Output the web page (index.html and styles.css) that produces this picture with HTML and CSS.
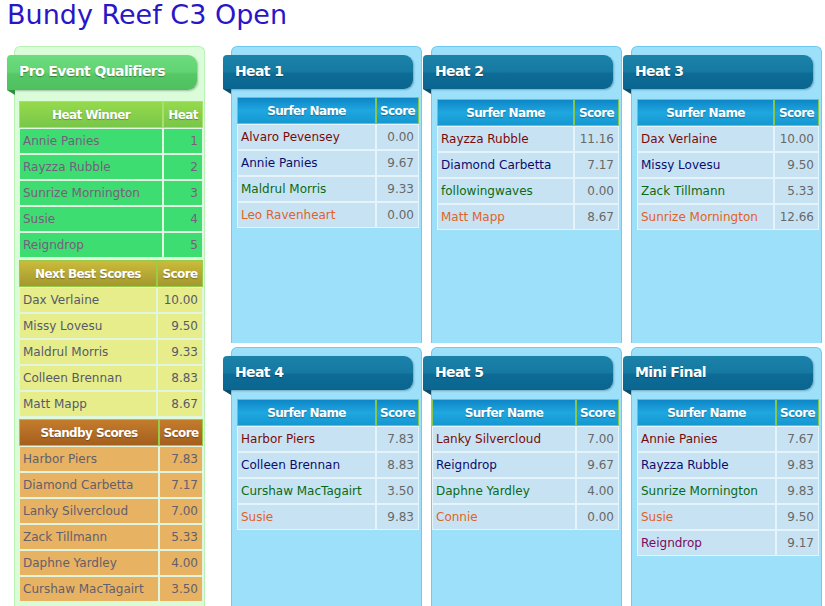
FILE: index.html
```html
<!DOCTYPE html>
<html>
<head>
<meta charset="utf-8">
<title>Bundy Reef C3 Open</title>
<link rel="stylesheet" href="styles.css">
</head>
<body>
<h1 class="title">Bundy Reef C3 Open</h1>
<div class="layout">
  <aside class="panel qual">
    <div class="ribbon ribbon-green">Pro Event Qualifiers</div>
    <table class="qtable q-win">
      <colgroup><col><col class="c-s"></colgroup>
      <tr><th>Heat Winner</th><th>Heat</th></tr>
      <tr><td>Annie Panies</td><td class="num">1</td></tr>
      <tr><td>Rayzza Rubble</td><td class="num">2</td></tr>
      <tr><td>Sunrize Mornington</td><td class="num">3</td></tr>
      <tr><td>Susie</td><td class="num">4</td></tr>
      <tr><td>Reigndrop</td><td class="num">5</td></tr>
    </table>
    <table class="qtable q-next">
      <colgroup><col><col class="c-s"></colgroup>
      <tr><th>Next Best Scores</th><th>Score</th></tr>
      <tr><td>Dax Verlaine</td><td class="num">10.00</td></tr>
      <tr><td>Missy Lovesu</td><td class="num">9.50</td></tr>
      <tr><td>Maldrul Morris</td><td class="num">9.33</td></tr>
      <tr><td>Colleen Brennan</td><td class="num">8.83</td></tr>
      <tr><td>Matt Mapp</td><td class="num">8.67</td></tr>
    </table>
    <table class="qtable q-stand">
      <colgroup><col><col class="c-s"></colgroup>
      <tr><th>Standby Scores</th><th>Score</th></tr>
      <tr><td>Harbor Piers</td><td class="num">7.83</td></tr>
      <tr><td>Diamond Carbetta</td><td class="num">7.17</td></tr>
      <tr><td>Lanky Silvercloud</td><td class="num">7.00</td></tr>
      <tr><td>Zack Tillmann</td><td class="num">5.33</td></tr>
      <tr><td>Daphne Yardley</td><td class="num">4.00</td></tr>
      <tr><td>Curshaw MacTagairt</td><td class="num">3.50</td></tr>
    </table>
  </aside>

  <div class="heats">
    <section class="panel heat">
      <div class="ribbon ribbon-blue">Heat 1</div>
      <div class="twrap">
      <table class="htable">
        <colgroup><col><col class="c-s"></colgroup>
        <tr><th>Surfer Name</th><th>Score</th></tr>
        <tr><td class="n1">Alvaro Pevensey</td><td class="num">0.00</td></tr>
        <tr><td class="n2">Annie Panies</td><td class="num">9.67</td></tr>
        <tr><td class="n3">Maldrul Morris</td><td class="num">9.33</td></tr>
        <tr><td class="n4">Leo Ravenheart</td><td class="num">0.00</td></tr>
      </table>
      </div>
    </section>
    <section class="panel heat">
      <div class="ribbon ribbon-blue">Heat 2</div>
      <div class="twrap low">
      <table class="htable wide-s">
        <colgroup><col><col class="c-s"></colgroup>
        <tr><th>Surfer Name</th><th>Score</th></tr>
        <tr><td class="n1">Rayzza Rubble</td><td class="num">11.16</td></tr>
        <tr><td class="n2">Diamond Carbetta</td><td class="num">7.17</td></tr>
        <tr><td class="n3">followingwaves</td><td class="num">0.00</td></tr>
        <tr><td class="n4">Matt Mapp</td><td class="num">8.67</td></tr>
      </table>
      </div>
    </section>
    <section class="panel heat">
      <div class="ribbon ribbon-blue">Heat 3</div>
      <div class="twrap low">
      <table class="htable wide-s">
        <colgroup><col><col class="c-s"></colgroup>
        <tr><th>Surfer Name</th><th>Score</th></tr>
        <tr><td class="n1">Dax Verlaine</td><td class="num">10.00</td></tr>
        <tr><td class="n2">Missy Lovesu</td><td class="num">9.50</td></tr>
        <tr><td class="n3">Zack Tillmann</td><td class="num">5.33</td></tr>
        <tr><td class="n4">Sunrize Mornington</td><td class="num">12.66</td></tr>
      </table>
      </div>
    </section>
    <section class="panel heat">
      <div class="ribbon ribbon-blue">Heat 4</div>
      <div class="twrap mid">
      <table class="htable">
        <colgroup><col><col class="c-s"></colgroup>
        <tr><th>Surfer Name</th><th>Score</th></tr>
        <tr><td class="n1">Harbor Piers</td><td class="num">7.83</td></tr>
        <tr><td class="n2">Colleen Brennan</td><td class="num">8.83</td></tr>
        <tr><td class="n3">Curshaw MacTagairt</td><td class="num">3.50</td></tr>
        <tr><td class="n4">Susie</td><td class="num">9.83</td></tr>
      </table>
      </div>
    </section>
    <section class="panel heat">
      <div class="ribbon ribbon-blue">Heat 5</div>
      <div class="twrap mid">
      <table class="htable wide">
        <colgroup><col><col class="c-s"></colgroup>
        <tr><th>Surfer Name</th><th>Score</th></tr>
        <tr><td class="n1">Lanky Silvercloud</td><td class="num">7.00</td></tr>
        <tr><td class="n2">Reigndrop</td><td class="num">9.67</td></tr>
        <tr><td class="n3">Daphne Yardley</td><td class="num">4.00</td></tr>
        <tr><td class="n4">Connie</td><td class="num">0.00</td></tr>
      </table>
      </div>
    </section>
    <section class="panel heat">
      <div class="ribbon ribbon-blue">Mini Final</div>
      <div class="twrap mid">
      <table class="htable">
        <colgroup><col><col class="c-s"></colgroup>
        <tr><th>Surfer Name</th><th>Score</th></tr>
        <tr><td class="n1">Annie Panies</td><td class="num">7.67</td></tr>
        <tr><td class="n2">Rayzza Rubble</td><td class="num">9.83</td></tr>
        <tr><td class="n3">Sunrize Mornington</td><td class="num">9.83</td></tr>
        <tr><td class="n4">Susie</td><td class="num">9.50</td></tr>
        <tr><td class="n5">Reigndrop</td><td class="num">9.17</td></tr>
      </table>
      </div>
    </section>
  </div>
</div>
</body>
</html>
```

FILE: styles.css
```css
html, body {
  margin: 0;
  padding: 0;
  background: #ffffff;
  font-family: "DejaVu Sans", Verdana, sans-serif;
  overflow: hidden;
}

.title {
  margin: 0;
  padding: 0 0 0 7px;
  height: 32px;
  font-size: 27px;
  line-height: 29px;
  font-weight: normal;
  color: #2a16c6;
}

.layout {
  display: flex;
  align-items: flex-start;
  gap: 26px;
  padding-left: 14px;
  margin-top: 14px;
}

.panel {
  box-sizing: border-box;
  width: 191px;
  border: 1px solid;
  border-bottom: none;
  border-radius: 6px 6px 0 0;
  padding-top: 8px;
}

.qual {
  background: #dafcd8;
  border-color: #b9f1b6;
  height: 600px;
}

.heat {
  background: #9de0fa;
  border-color: #6fc9f1;
  height: 297px;
}

.heats {
  display: grid;
  grid-template-columns: repeat(3, 191px);
  column-gap: 9px;
  row-gap: 4px;
}

/* ribbons */
.ribbon {
  position: relative;
  box-sizing: border-box;
  width: 190px;
  height: 34px;
  margin-left: -9px;
  padding-left: 12px;
  color: #ffffff;
  font-weight: bold;
  font-size: 14px;
  letter-spacing: -0.6px;
  line-height: 32px;
  border-radius: 4px 9px 9px 0;
  text-shadow: 0 1px 1px rgba(0, 0, 0, 0.35);
  box-shadow: 1px 1px 2px rgba(0, 0, 0, 0.25);
}
.ribbon::after {
  content: "";
  position: absolute;
  left: 0;
  top: 100%;
  width: 8px;
  height: 5px;
  clip-path: polygon(0 0, 100% 0, 100% 100%);
}
.ribbon-blue {
  background: linear-gradient(#1b82aa 0%, #167aa2 48%, #0d6b95 55%, #0a6690 100%);
}
.ribbon-blue::after { background: #0b4a68; }
.ribbon-green {
  margin-left: -8px;
  height: 35px;
  background: linear-gradient(#6cdc7e 0%, #62d474 48%, #55c866 55%, #4fc060 100%);
  padding-left: 12px;
}
.ribbon-green::after { background: #2f8e3c; }

/* tables */
table {
  border-collapse: separate;
  border-spacing: 0;
  font-size: 12px;
}
th, td {
  box-sizing: border-box;
  height: 26px;
  padding: 0 3px;
  white-space: nowrap;
}
th {
  color: #ffffff;
  font-weight: bold;
  text-align: center;
  letter-spacing: -0.6px;
  text-shadow: 0 1px 1px rgba(0, 0, 0, 0.3);
}
td.num { text-align: right; padding-right: 4px; }

.qtable {
  width: 184px;
  margin-left: 4px;
  table-layout: fixed;
}
.q-win { margin-top: 11px; }
.q-next, .q-stand { margin-top: 2px; }
.qtable th { height: 27px; border: 1px solid; }
.qtable td { border: 1px solid #e2f5df; }
.q-win .c-s { width: 40px; }
.q-next .c-s { width: 46px; }
.q-stand .c-s { width: 44px; }

.q-win th {
  background: linear-gradient(#96da4c, #78c64a);
  border-color: #a6e26a;
}
.q-win td { background: #3edd72; color: #76607c; }

.q-next th {
  background: linear-gradient(#cbbb3c, #a2982e);
  border-color: #98cc48;
}
.q-next td { background: #e6ed8a; color: #585a6c; }

.q-stand th {
  background: linear-gradient(#c47c2c, #a45f1e);
  border-color: #98cc48;
}
.q-stand td { background: #e8b263; color: #62606c; }

.twrap {
  display: flex;
  justify-content: flex-end;
  padding-right: 2px;
  margin-top: 8px;
}
.twrap.mid { margin-top: 9px; }
.twrap.low { margin-top: 10px; }

.htable {
  width: 182px;
  table-layout: fixed;
}
.htable.wide { width: 187px; }
.htable .c-s { width: 43px; }
.htable.wide-s .c-s { width: 45px; }
.htable th {
  height: 27px;
  background: linear-gradient(#0d86c7 0%, #1fa7df 50%, #1598d1 100%);
  border: 1px solid #86c84e;
}
.htable td {
  background: #c7e3f3;
  border: 1px solid #e5f3fb;
  color: #686868;
}
.htable td.n1 { color: #7a0a0a; }
.htable td.n2 { color: #0c0c6e; }
.htable td.n3 { color: #0a6a14; }
.htable td.n4 { color: #e0622a; }
.htable td.n5 { color: #7a0a5e; }
```
